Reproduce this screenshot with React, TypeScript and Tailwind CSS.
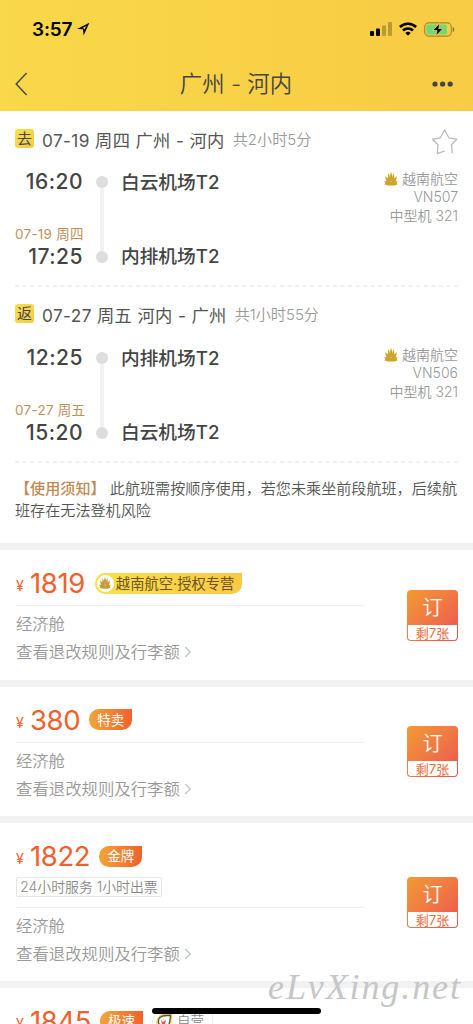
import { ReactNode } from 'react';
import clsx from 'clsx';

interface FlightLegProps {
  departTime: string;
  departAirport: string;
  arriveDate: string;
  arriveTime: string;
  arriveAirport: string;
  flightNo: string;
}

interface FareCardProps {
  price: string;
  tag: ReactNode;
  service?: string;
}

function Lotus({ className }: { className?: string }) {
  return (
    <svg viewBox="0 0 14 14" className={className} fill="currentColor">
      <path d="M7 0 8.2 3.6 8 8 7 12 6 8 5.8 3.6Z" />
      <path d="M4.2 1 5.8 5 6.8 12 4.2 9 3.8 5Z" />
      <path d="M9.8 1 8.2 5 7.2 12 9.8 9 10.2 5Z" />
      <path d="M1 4.2 4.1 6.4 6.6 12.2 3 10.4 1.8 7.6Z" />
      <path d="M13 4.2 9.9 6.4 7.4 12.2 11 10.4 12.2 7.6Z" />
      <path d="M0 9.4 4 8.8 7 10.4 10 8.8 14 9.4 12.6 10.8 13.4 12.6 10 13.6H4L.6 12.6 1.4 10.8Z" />
    </svg>
  );
}

function StatusBar() {
  return (
    <div className="flex h-[56px] items-center justify-between pl-8 pr-[18px] pt-[2px]">
      <div className="flex items-center gap-[5px]">
        <span className="text-[19px] font-semibold leading-none tracking-[-0.2px] text-black">3:57</span>
        <svg width="13" height="14" viewBox="0 0 13 14">
          <path d="M12.4.7 0 6.9 6 7.3 6.6 13.4Z" fill="#000" />
          <path d="M9.4 4 5.4 6 7 6.4 7.3 7.8Z" fill="#f9d549" />
        </svg>
      </div>
      <div className="flex items-center gap-[7px]">
        <svg width="22" height="14" viewBox="0 0 22 14">
          <rect x="0" y="9" width="4" height="5" rx="1" />
          <rect x="6" y="6.5" width="4" height="7.5" rx="1" />
          <rect x="12" y="3.5" width="4" height="10.5" rx="1" opacity="0.25" />
          <rect x="18" y="0" width="4" height="14" rx="1" opacity="0.25" />
        </svg>
        <svg width="18" height="14" viewBox="0 0 18 14" fill="none" stroke="#000" strokeWidth="2.7">
          <path d="M.9 5A11.7 11.7 0 0 1 17.1 5" />
          <path d="M4 8.5A7.2 7.2 0 0 1 14 8.5" />
          <path d="M9 13.8 6.3 11A4 4 0 0 1 11.7 11Z" fill="#000" stroke="none" />
        </svg>
        <svg width="31" height="15" viewBox="0 0 31 15">
          <rect x="0.7" y="0.9" width="26.6" height="13.2" rx="4" fill="none" stroke="#a3862d" strokeWidth="1.1" />
          <rect x="2.4" y="2.6" width="20.6" height="9.8" rx="2" fill="#6fd87a" />
          <path d="M28.7 5C30.8 5.6 30.8 9.4 28.7 10Z" fill="#92782a" />
          <path d="M15.8 1 8.8 8.5H13L11.8 14 19 6.6H14.8Z" fill="#000" stroke="#f9cf48" strokeWidth="0.8" />
        </svg>
      </div>
    </div>
  );
}

function Header() {
  return (
    <header className="h-[111px] bg-linear-to-r from-[#f9d849] to-[#f8cb44]">
      <StatusBar />
      <div className="flex h-[55px] items-center justify-between pl-[15px] pr-5">
        <svg width="13" height="24" viewBox="0 0 13 24" fill="none" stroke="#444" strokeWidth="1.4">
          <path d="M11.6 1 1.2 12 11.6 23" />
        </svg>
        <h1 className="pl-[12px] pt-[2px] text-[22.4px] font-[350] leading-none text-[#444]">广州 - 河内</h1>
        <svg width="21" height="6" viewBox="0 0 21 6" fill="#444">
          <circle cx="3" cy="3" r="2.6" />
          <circle cx="10.6" cy="3" r="2.6" />
          <circle cx="18.2" cy="3" r="2.6" />
        </svg>
      </div>
    </header>
  );
}

function LegTitle({ label, title, duration }: { label: string; title: string; duration: string }) {
  return (
    <div className="flex h-[22px] items-center">
      <span className="mb-[3px] h-[19px] w-[19px] rounded-[3px] bg-linear-to-br from-[#f9e04c] to-[#f7ca45] text-center text-[15px] leading-[20px] text-[#444]">
        {label}
      </span>
      <span className="ml-2 whitespace-nowrap pt-px text-[17.3px] tracking-[0.35px] text-[#555]">{title}</span>
      <span className="ml-[8px] whitespace-nowrap pt-px text-[15.1px] font-[350] text-[#999]">{duration}</span>
    </div>
  );
}

function FlightLeg(props: FlightLegProps) {
  return (
    <div className="flex h-[97px] justify-between">
      <div className="flex">
        <div className="flex w-[72px] flex-col justify-between">
          <span className="pr-1 text-right text-[21px] font-medium leading-[22px] tracking-[0.5px] text-[#444]">
            {props.departTime}
          </span>
          <div className="flex flex-col">
            <span className="whitespace-nowrap text-[13.5px] leading-[24px] tracking-[0.25px] text-[#c0905a]">
              {props.arriveDate}
            </span>
            <span className="pr-1 text-right text-[21px] font-medium leading-[22px] tracking-[0.5px] text-[#444]">
              {props.arriveTime}
            </span>
          </div>
        </div>
        <div className="ml-[9px] flex w-3 flex-col items-center py-[5px]">
          <i className="h-3 w-3 shrink-0 rounded-full bg-[#ddd]" />
          <i className="w-[4px] flex-1 bg-[#f2f2f2]" />
          <i className="h-3 w-3 shrink-0 rounded-full bg-[#ddd]" />
        </div>
        <div className="ml-[13px] flex flex-col justify-between pt-px text-[18.7px] font-medium leading-[22px] text-[#444]">
          <span>{props.departAirport}</span>
          <span>{props.arriveAirport}</span>
        </div>
      </div>
      <div className="-mt-px text-right text-[14px] font-[350] leading-[18.5px] text-[#999]">
        <div className="flex items-center justify-end gap-1">
          <Lotus className="h-[14px] w-[14px] text-[#cda52d]" />
          越南航空
        </div>
        <div className="leading-[16px]">{props.flightNo}</div>
        <div className="pt-[2px]">中型机 321</div>
      </div>
    </div>
  );
}

function Dashes() {
  return (
    <svg className="block h-[2px] w-full">
      <line x1="0" y1="1" x2="443" y2="1" stroke="#efefef" strokeWidth="1.5" strokeDasharray="4 3.57" />
    </svg>
  );
}

function Tag({ children }: { children: ReactNode }) {
  return (
    <span className="flex h-[21px] w-[43px] items-center justify-center rounded-[10px] rounded-tr-none bg-linear-to-r from-[#f2a43a] to-[#f0602c] pt-[2px] text-[13.5px] leading-none text-white">
      {children}
    </span>
  );
}

function AirlineTag() {
  return (
    <span className="ml-px flex h-[21px] w-[147px] items-center whitespace-nowrap rounded-[10px] rounded-tr-none bg-linear-to-r from-[#f9e04b] to-[#f8c945] pl-[2px] text-[14.3px] leading-none text-[#6d5220]">
      <span className="mr-[2px] flex h-[17px] w-[17px] items-center justify-center rounded-full bg-white">
        <Lotus className="h-3 w-3 text-[#c69c36]" />
      </span>
      <span className="pt-[2px]">越南航空·授权专营</span>
    </span>
  );
}

function BookButton() {
  return (
    <button className="mt-px flex h-[51px] w-[51px] shrink-0 flex-col overflow-hidden rounded-[4px] bg-linear-to-br from-[#f29a30] to-[#ec5050]">
      <span className="h-[35px] w-full text-center text-[20px] font-[350] leading-[37px] text-white">订</span>
      <span className="mx-px h-[15px] w-[49px] overflow-hidden rounded-b-[3px] bg-white text-center text-[13px] leading-[17px] text-[#ee6a38]">
        剩7张
      </span>
    </button>
  );
}

function Price({ value }: { value: string }) {
  return (
    <div className="flex items-baseline text-[#f15f2c]">
      <span className="relative -top-[2px] w-[14px] text-[14px] leading-none">¥</span>
      <span className="text-[27.5px] leading-[34px] tracking-[-0.4px]">{value}</span>
    </div>
  );
}

function FareCard({ price, tag, service }: FareCardProps) {
  return (
    <section
      className={clsx(
        'flex items-center justify-between border-b-[7px] border-[#f2f2f2] bg-white pl-4 pr-[15px]',
        service ? 'h-[165px]' : 'h-[136.5px]'
      )}
    >
      <div className={clsx('w-[348px]', service ? 'h-[158px]' : 'h-[129.5px]')}>
        <div className="flex items-center gap-[9px] pt-4">
          <Price value={price} />
          {tag}
        </div>
        {service && (
          <div className="mt-1 w-[146px] whitespace-nowrap rounded-[2px] border border-[#e6e6e6] text-center text-[13.9px] font-[350] leading-[18px] text-[#888]">
            {service}
          </div>
        )}
        <div className={clsx('border-t border-[#f0f0f0]', service ? 'mt-[10px]' : 'mt-[5px]')} />
        <p className="mt-[4px] text-[16.3px] font-[350] leading-[28px] text-[#999]">经济舱</p>
        <p className="flex items-center gap-1 text-[16.4px] font-[350] leading-[28px] text-[#999]">
          查看退改规则及行李额
          <svg width="8" height="12" viewBox="0 0 8 12" fill="none" stroke="#c8c8c8" strokeWidth="1.5">
            <path d="M1.2 1 6.2 6 1.2 11" />
          </svg>
        </p>
      </div>
      <BookButton />
    </section>
  );
}

function SelfRunTag() {
  return (
    <span className="flex h-[21px] items-center rounded-l-[10px] border border-[#eee] pl-[2px] pr-2 pt-[2px] text-[13.5px] font-[350] leading-none text-[#888]">
      <svg width="18" height="18" viewBox="0 0 18 18" className="mr-1">
        <path d="M17.5.5C16.5 7 17 10 15 13a7.5 7.5 0 1 1-11-10C7 0 11 1 17.5.5Z" fill="#f7cf3c" />
        <path d="M15.5 2.3C15 7 15 10 13.4 12.3A5.7 5.7 0 1 1 5 4.4C8 1.8 11 2.8 15.5 2.3Z" fill="#fff" stroke="#555" strokeWidth="1.3" />
        <path d="m6 7 2 2 3-2-1 4H7Z" fill="#e8534d" />
      </svg>
      自营
    </span>
  );
}

export default function App() {
  return (
    <div className="relative h-[1024px] w-[473px] overflow-hidden bg-white font-[Inter,'Noto_Sans_CJK_SC',sans-serif]">
      <Header />

      <main>
        <section className="h-[439px] border-b-[7px] border-[#f2f2f2] px-[15px] pt-[18px]">
          <div className="flex h-[26px] justify-between">
            <LegTitle label="去" title="07-19 周四 广州 - 河内" duration="共2小时5分" />
            <svg width="27" height="26" viewBox="0 0 27 26" fill="none" stroke="#bbb" strokeWidth="1.3" strokeLinecap="round" strokeLinejoin="round">
              <path d="M13.3 22.2 6.3 24.7 7 15.8 1.4 10.2 9.2 8.8 13.6 1 17.8 8.8 25.7 10.2 20.5 15.8 21.3 23.7" />
            </svg>
          </div>
          <div className="mt-[16px]">
            <FlightLeg
              departTime="16:20"
              departAirport="白云机场T2"
              arriveDate="07-19 周四"
              arriveTime="17:25"
              arriveAirport="内排机场T2"
              flightNo="VN507"
            />
          </div>
          <div className="mt-[17px]">
            <Dashes />
          </div>
          <div className="mt-[17px]">
            <LegTitle label="返" title="07-27 周五 河内 - 广州" duration="共1小时55分" />
          </div>
          <div className="mt-[21px]">
            <FlightLeg
              departTime="12:25"
              departAirport="内排机场T2"
              arriveDate="07-27 周五"
              arriveTime="15:20"
              arriveAirport="白云机场T2"
              flightNo="VN506"
            />
          </div>
          <div className="mt-[17px]">
            <Dashes />
          </div>
          <p className="mt-[15px] whitespace-nowrap text-[15.1px] font-[350] leading-[21.5px] text-[#555]">
            <span className="font-medium text-[#c08a50]">【使用须知】</span> 此航班需按顺序使用，若您未乘坐前段航班，后续航
            <br />
            班存在无法登机风险
          </p>
        </section>

        <FareCard price="1819" tag={<AirlineTag />} />
        <FareCard price="380" tag={<Tag>特卖</Tag>} />
        <FareCard price="1822" tag={<Tag>金牌</Tag>} service="24小时服务 1小时出票" />
        <section className="flex items-center gap-[9px] pl-4 pt-4">
          <Price value="1845" />
          <Tag>极速</Tag>
          <SelfRunTag />
        </section>
      </main>

      {/* Home indicator and watermark float over the list */}
      <div className="absolute left-[152px] top-[1008px] h-[6px] w-[169px] rounded-full bg-black" />
      <div className="absolute left-[268px] top-[964px] whitespace-nowrap font-['Liberation_Serif',serif] text-[36px] italic leading-[46px] tracking-[1.9px] text-[#c6c6c6]">
        eLvXing.net
      </div>
    </div>
  );
}
